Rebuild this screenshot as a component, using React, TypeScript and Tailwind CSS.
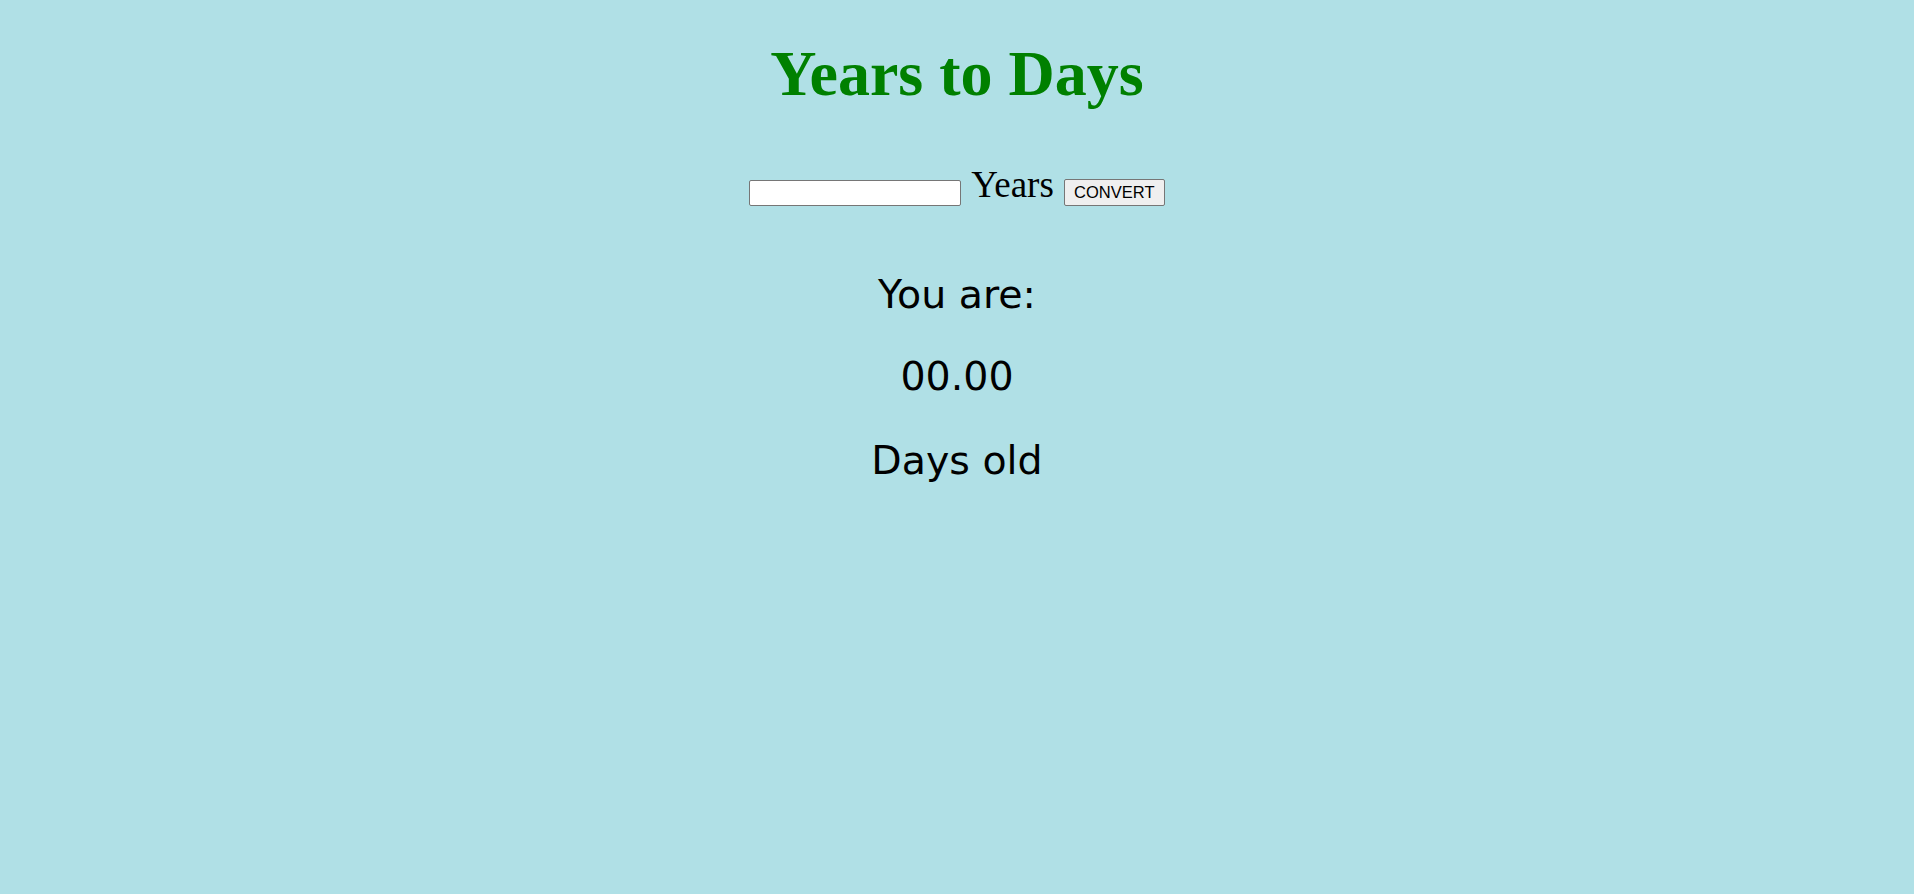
export default function App() {
  return (
    <div className="min-h-screen w-full bg-[#b0e0e6] flex flex-col items-center">
      {/* Heading */}
      <h1 className="mt-[42px] text-[64px] leading-none font-bold text-[#008000] [font-family:'Liberation_Serif',serif]">
        Years to Days
      </h1>

      {/* Input row */}
      <div className="mt-[60px] flex items-end gap-[10px]">
        <input
          type="text"
          className="w-[212px] h-[26px] bg-white border border-[#767676] rounded-[2px] px-1 text-[16px] [font-family:'Liberation_Sans',sans-serif]"
        />
        <span className="mb-[3px] text-[37px] leading-none text-black [font-family:'Liberation_Serif',serif]">
          Years
        </span>
        <button className="w-[101px] h-[27px] bg-[#efefef] border border-[#767676] rounded-[2px] text-[16.5px] leading-none text-black [font-family:'Liberation_Sans',sans-serif]">
          CONVERT
        </button>
      </div>

      {/* Result */}
      <div className="mt-[69px] flex flex-col items-center text-[39.5px] leading-none text-black [font-family:'DejaVu_Sans',sans-serif]">
        <p>You are:</p>
        <p className="mt-[42px]">00.00</p>
        <p className="mt-[45px]">Days old</p>
      </div>
    </div>
  );
}
